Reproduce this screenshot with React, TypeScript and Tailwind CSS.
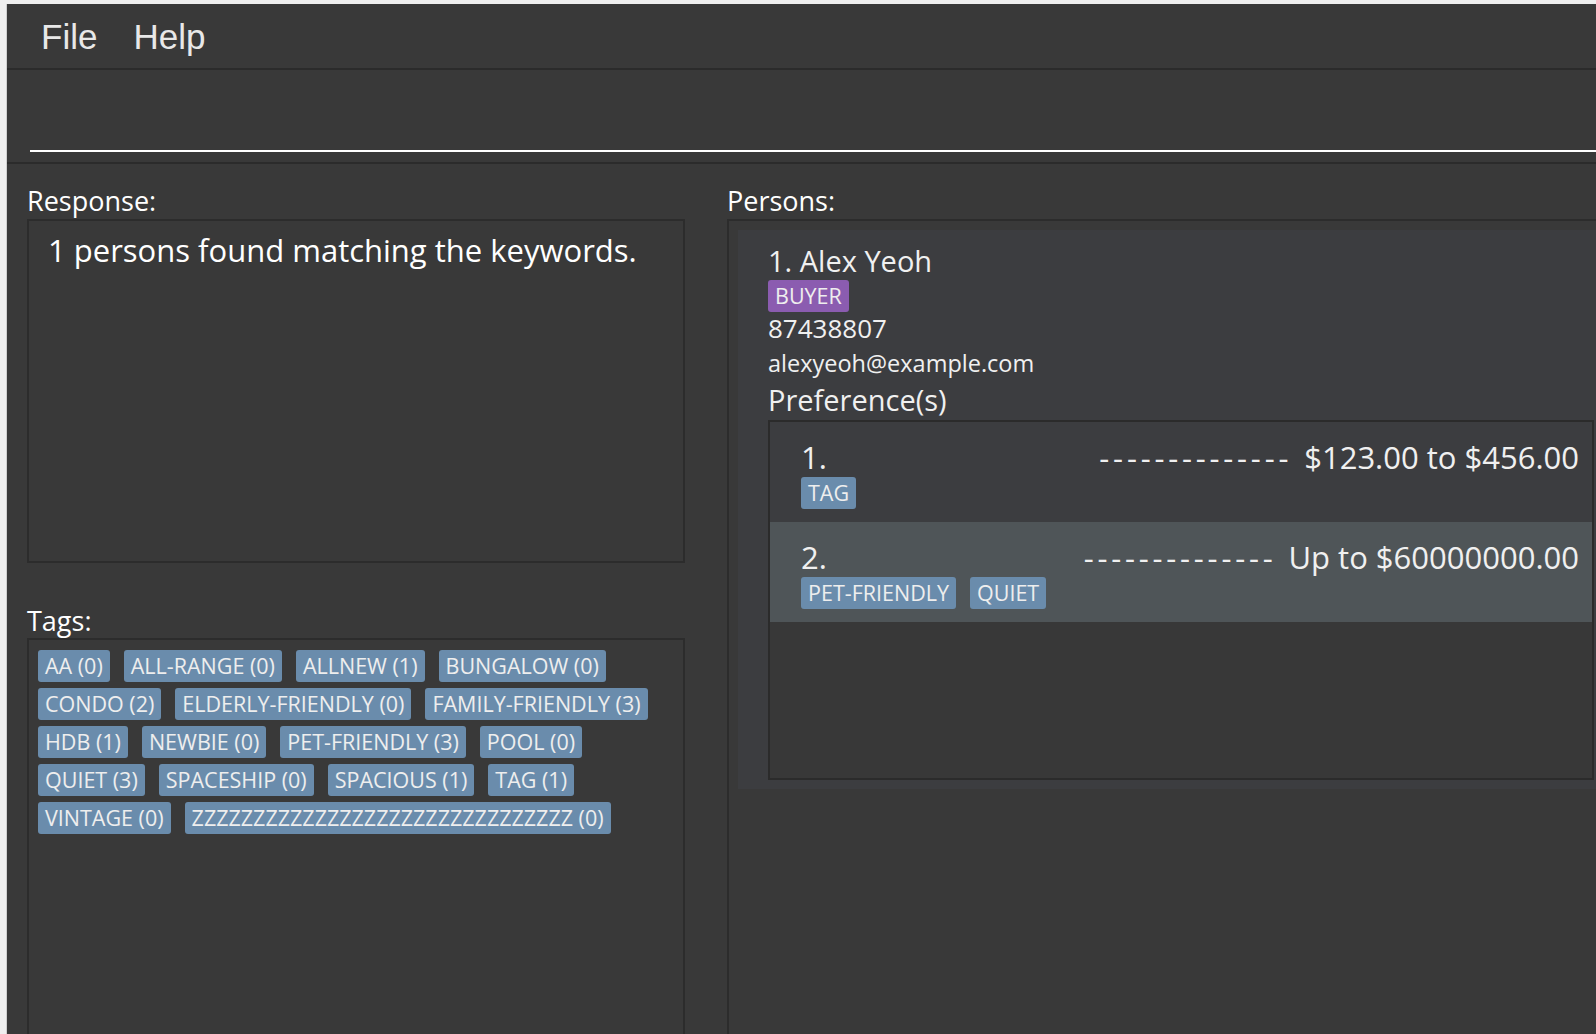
import React from "react";

const tags: [string, number][] = [
  ["AA", 0],
  ["ALL-RANGE", 0],
  ["ALLNEW", 1],
  ["BUNGALOW", 0],
  ["CONDO", 2],
  ["ELDERLY-FRIENDLY", 0],
  ["FAMILY-FRIENDLY", 3],
  ["HDB", 1],
  ["NEWBIE", 0],
  ["PET-FRIENDLY", 3],
  ["POOL", 0],
  ["QUIET", 3],
  ["SPACESHIP", 0],
  ["SPACIOUS", 1],
  ["TAG", 1],
  ["VINTAGE", 0],
  ["ZZZZZZZZZZZZZZZZZZZZZZZZZZZZZZZ", 0],
];

function Chip({ label, purple }: { label: string; purple?: boolean }) {
  return (
    <span
      className={
        "inline-block h-[32px] px-[7px] rounded-[3px] text-[21.5px] leading-[32px] text-[#eeeeee] whitespace-nowrap " +
        (purple ? "bg-[#8b5cb0]" : "bg-[#6a8cac]")
      }
    >
      {label}
    </span>
  );
}

function PrefRow({
  num,
  chips,
  price,
  light,
}: {
  num: string;
  chips: string[];
  price: string;
  light?: boolean;
}) {
  return (
    <div
      className={
        "flex justify-between items-start pl-[31px] pr-[13px] pt-[17px] pb-[13px] " +
        (light ? "bg-[#4f5558]" : "bg-[#3c3d40]")
      }
    >
      <div className="flex flex-col">
        <div className="text-[31px] leading-[36px] text-[#f0f0f0]">{num}</div>
        <div className="flex gap-[14px] mt-[2px]">
          {chips.map((c) => (
            <Chip key={c} label={c} />
          ))}
        </div>
      </div>
      <div className="flex items-start gap-[12px] text-[31px] leading-[36px] text-[#f0f0f0] whitespace-nowrap">
        <span className="tracking-[3.8px]">--------------</span>
        <span>{price}</span>
      </div>
    </div>
  );
}

export default function App() {
  return (
    <div className="w-[1596px] h-[1034px] overflow-hidden bg-[#efefef] pt-[4px] pl-[6px] font-['Open_Sans',sans-serif]">
      <div className="h-full bg-[#393939] flex flex-col border-l border-[#cfcfcf]">
        {/* menu bar */}
        <div className="h-[64px] flex gap-[36px] pl-[34px] font-['Liberation_Sans',Arial,sans-serif] text-[35px] leading-[66px] text-[#e8e8e8] shrink-0">
          <span>File</span>
          <span>Help</span>
        </div>
        <div className="h-[2px] bg-[#2b2b2b] shrink-0" />
        {/* command box */}
        <div className="h-[92px] flex items-end pb-[10px] pl-[23px] shrink-0">
          <div className="h-[2px] flex-1 bg-white" />
        </div>
        <div className="h-[2px] bg-[#2b2b2b] shrink-0" />
        {/* main */}
        <div className="flex h-[900px] shrink-0 pl-[20px] pt-[22px] gap-[42px]">
          {/* left */}
          <div className="w-[658px] flex flex-col shrink-0">
            <div className="text-[27px] leading-[30px] text-white">Response:</div>
            <div className="mt-[3px] h-[344px] border-2 border-[#2c2c2c] pl-[19px] pt-[9px] shrink-0">
              <div className="text-[31px] leading-[40px] text-white">
                1 persons found matching the keywords.
              </div>
            </div>
            <div className="mt-[43px] text-[27px] leading-[30px] text-white">Tags:</div>
            <div className="mt-[2px] flex-1 border-2 border-[#2c2c2c] pl-[9px] pr-[9px] pt-[10px]">
              <div className="flex flex-wrap gap-x-[14px] gap-y-[6px]">
                {tags.map(([t, n]) => (
                  <Chip key={t} label={`${t} (${n})`} />
                ))}
              </div>
            </div>
          </div>
          {/* right */}
          <div className="w-[908px] flex flex-col shrink-0">
            <div className="text-[27px] leading-[30px] text-white">Persons:</div>
            <div className="mt-[3px] flex-1 border-2 border-[#2c2c2c] pl-[9px] pt-[9px]">
              <div className="w-[886px] bg-[#3c3d40] pl-[30px] pr-[30px] pt-[14px] pb-[9px] flex flex-col">
                <div className="text-[29px] leading-[34px] text-[#f0f0f0]">1. Alex Yeoh</div>
                <div className="mt-[2px] flex">
                  <Chip label="BUYER" purple />
                </div>
                <div className="mt-[1px] text-[26px] leading-[30px] text-[#f0f0f0]">87438807</div>
                <div className="mt-[5px] text-[23.5px] leading-[30px] text-[#f0f0f0]">
                  alexyeoh@example.com
                </div>
                <div className="mt-[5px] text-[29px] leading-[34px] text-[#f0f0f0]">Preference(s)</div>
                <div className="mt-[3px] h-[360px] border-2 border-[#2b2b2b] bg-[#383838] flex flex-col">
                  <PrefRow num="1." chips={["TAG"]} price="$123.00 to $456.00" />
                  <PrefRow
                    num="2."
                    chips={["PET-FRIENDLY", "QUIET"]}
                    price="Up to $60000000.00"
                    light
                  />
                </div>
              </div>
            </div>
          </div>
        </div>
      </div>
    </div>
  );
}
